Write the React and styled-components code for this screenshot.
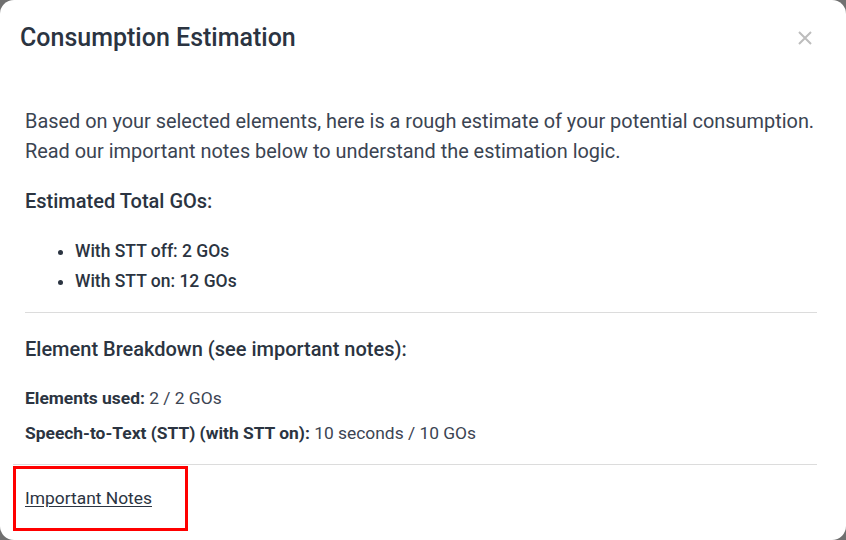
import React from "react";
import styled, { createGlobalStyle } from "styled-components";

const GlobalStyle = createGlobalStyle`
  html, body {
    margin: 0;
    padding: 0;
    background: #707070;
    overflow: hidden;
  }
  body {
    font-family: Roboto, "Liberation Sans", sans-serif;
  }
`;

const Modal = styled.div`
  width: 846px;
  height: 540px;
  background: #fff;
  border-radius: 14px;
  box-sizing: border-box;
  display: flex;
  flex-direction: column;
  color: #374151;
`;

const Header = styled.div`
  display: flex;
  justify-content: space-between;
  align-items: center;
  padding: 22px 33px 22px 20px;
`;

const Title = styled.h2`
  margin: 0;
  font-size: 25px;
  line-height: 32px;
  font-weight: 500;
  color: #2b3441;
`;

const Close = styled.button`
  border: none;
  background: none;
  padding: 0;
  color: #bdbdbd;
  display: flex;
  cursor: pointer;
`;

const Body = styled.div`
  padding: 31px 29px 0 25px;
  display: flex;
  flex-direction: column;
`;

const Intro = styled.p`
  margin: 0;
  font-size: 19.9px;
  line-height: 30px;
  white-space: nowrap;
  color: #3b4452;
`;

const SectionTitle = styled.h3`
  margin: ${(p) => p.$top}px 0 0;
  font-size: 20px;
  line-height: 27px;
  font-weight: 500;
  color: #2b3441;
`;

const List = styled.ul`
  margin: 20.5px 0 0;
  padding-left: 50px;
  font-size: 17.5px;
  line-height: 30px;
  font-weight: 500;
  color: #2b3441;
`;

const Divider = styled.hr`
  border: none;
  border-top: 1px solid #dcdcdc;
  margin: ${(p) => p.$top}px 0 0;
`;

const Row = styled.div`
  margin-top: ${(p) => p.$top}px;
  font-size: 17.4px;
  line-height: 24px;
  color: #3b4452;

  b {
    font-weight: 700;
    color: #2b3441;
  }
`;

const Footer = styled.div`
  margin: 1px 0 0 13px;
  width: 175px;
  height: 65px;
  box-sizing: border-box;
  border: 3px solid #f00;
  display: flex;
  align-items: center;
  padding-left: 9px;
`;

const NotesLink = styled.a`
  font-size: 17.4px;
  color: #2b3441;
  text-decoration: underline;
  text-underline-offset: 2px;
`;

const BottomRule = styled(Divider)`
  margin: 19px 29px 0 13px;
`;

export default function App() {
  return (
    <>
      <GlobalStyle />
      <Modal>
        <Header>
          <Title>Consumption Estimation</Title>
          <Close aria-label="Close">
            <svg width="16" height="16" viewBox="0 0 16 16">
              <path d="M2 2L14 14M14 2L2 14" stroke="currentColor" strokeWidth="2" />
            </svg>
          </Close>
        </Header>
        <Body>
          <Intro>
            Based on your selected elements, here is a rough estimate of your potential consumption.
            <br />
            Read our important notes below to understand the estimation logic.
          </Intro>
          <SectionTitle $top={21}>Estimated Total GOs:</SectionTitle>
          <List>
            <li>With STT off: 2 GOs</li>
            <li>With STT on: 12 GOs</li>
          </List>
          <Divider $top={16} />
          <SectionTitle $top={23}>Element Breakdown (see important notes):</SectionTitle>
          <Row $top={23}>
            <b>Elements used:</b> 2 / 2 GOs
          </Row>
          <Row $top={11}>
            <b>Speech-to-Text (STT) (with STT on):</b> 10 seconds / 10 GOs
          </Row>
        </Body>
        <BottomRule />
        <Footer>
          <NotesLink href="#notes">Important Notes</NotesLink>
        </Footer>
      </Modal>
    </>
  );
}
